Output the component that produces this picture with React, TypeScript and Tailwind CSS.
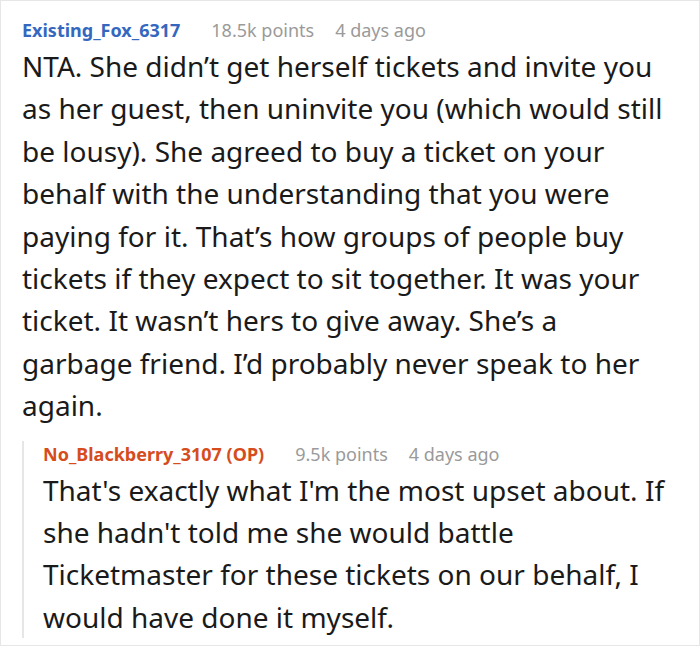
import React from 'react';

const font = { fontFamily: '"Noto Sans", "Open Sans", sans-serif' };

interface MetaProps {
  author: string;
  points: string;
  time: string;
  op?: boolean;
}

const CommentMeta: React.FC<MetaProps> = ({ author, points, time, op }) => (
  <div className="flex items-baseline text-[18px] leading-[26px] whitespace-nowrap">
    <span className={`font-bold ${op ? 'text-[#d64c1c]' : 'text-[#3468bf]'}`}>{author}</span>
    <span className="ml-[31px] text-[#9a9a9a]">{points}</span>
    <span className="ml-[21px] text-[#9a9a9a]">{time}</span>
  </div>
);

const bodyLines = [
  'NTA. She didn’t get herself tickets and invite you',
  'as her guest, then uninvite you (which would still',
  'be lousy). She agreed to buy a ticket on your',
  'behalf with the understanding that you were',
  'paying for it. That’s how groups of people buy',
  'tickets if they expect to sit together. It was your',
  'ticket. It wasn’t hers to give away. She’s a',
  'garbage friend. I’d probably never speak to her',
  'again.',
];

const replyLines = [
  "That's exactly what I'm the most upset about. If",
  "she hadn't told me she would battle",
  'Ticketmaster for these tickets on our behalf, I',
  'would have done it myself.',
];

export default function App() {
  return (
    <div
      className="w-[700px] h-[646px] bg-white border border-[#e6e6e6] pt-[16px] pl-[21px] overflow-hidden"
      style={font}
    >
      <CommentMeta author="Existing_Fox_6317" points="18.5k points" time="4 days ago" />
      <div className="mt-[2px] text-[28px] leading-[42.4px] text-[#1a1a1a] whitespace-nowrap">
        {bodyLines.map((l, i) => (
          <div key={i}>{l}</div>
        ))}
      </div>

      {/* reply thread */}
      <div className="mt-[26px] border-l-2 border-[#e6e6e6] pl-[19px]">
        <div className="-mt-[12px]">
          <CommentMeta author="No_Blackberry_3107 (OP)" points="9.5k points" time="4 days ago" op />
        </div>
        <div className="mt-[2px] -mb-[10px] text-[28px] leading-[42.4px] text-[#1a1a1a] whitespace-nowrap">
          {replyLines.map((l, i) => (
            <div key={i}>{l}</div>
          ))}
        </div>
      </div>
    </div>
  );
}
